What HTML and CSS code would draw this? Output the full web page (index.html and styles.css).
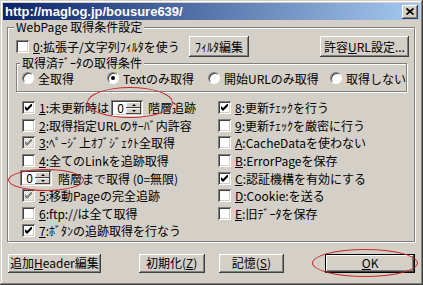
FILE: index.html
```html
<!DOCTYPE html>
<html lang="ja">
<head>
<meta charset="UTF-8">
<title>http://maglog.jp/bousure639/</title>
<link rel="stylesheet" href="styles.css">
</head>
<body>
<div class="window">
    <!-- タイトルバー -->
    <div class="titlebar">
        <span class="title">http://maglog.jp/bousure639/</span>
        <span class="close">
            <svg width="8" height="7" viewBox="0 0 8 7"><path d="M0.5 0.5l7 6M7.5 0.5l-7 6" stroke="#000" stroke-width="1.7"/></svg>
        </span>
    </div>

    <div class="content">
        <fieldset class="group main">
            <legend>WebPage 取得条件設定</legend>

            <div class="top-row">
                <label class="check first"><span class="box"></span><span><u>0</u>:拡張子/文字列ﾌｨﾙﾀを使う</span></label>
                <button class="btn filter">ﾌｨﾙﾀ編集</button>
                <button class="btn allow">許容<u>U</u>RL設定...</button>
            </div>

            <fieldset class="group sub">
                <legend>取得済ﾃﾞｰﾀの取得条件</legend>
                <div class="radios">
                    <label class="radio r1"><span class="dot"></span>全取得</label>
                    <label class="radio r2"><span class="dot on"></span>Textのみ取得</label>
                    <label class="radio r3"><span class="dot"></span>開始URLのみ取得</label>
                    <label class="radio"><span class="dot"></span>取得しない</label>
                </div>
            </fieldset>

            <div class="options">
                <div class="col left">
                    <label class="check">
                        <span class="box"><svg width="7" height="7" viewBox="0 0 7 7"><polygon points="0,2 2,4 7,-1 7,2 2,7 0,5"/></svg></span>
                        <span class="lbl-1"><u>1</u>:未更新時は</span>
                        <span class="spin s1"><span class="spin-val">0</span><span class="spin-btns"><span class="up"></span><span class="down"></span></span></span>
                        <span class="after-spin">階層追跡</span>
                    </label>
                    <label class="check"><span class="box"></span><span><u>2</u>:取得指定URLのｻｰﾊﾞ内許容</span></label>
                    <label class="check"><span class="box off"><svg width="7" height="7" viewBox="0 0 7 7"><polygon points="0,2 2,4 7,-1 7,2 2,7 0,5"/></svg></span><span><u>3</u>:ﾍﾟｰｼﾞ上ｵﾌﾞｼﾞｪｸﾄ全取得</span></label>
                    <label class="check"><span class="box"></span><span><u>4</u>:全てのLinkを追跡取得</span></label>
                    <div class="check depth">
                        <span class="spin"><span class="spin-val">0</span><span class="spin-btns"><span class="up"></span><span class="down"></span></span></span>
                        <span>階層まで取得 (0=無限)</span>
                    </div>
                    <label class="check"><span class="box off"><svg width="7" height="7" viewBox="0 0 7 7"><polygon points="0,2 2,4 7,-1 7,2 2,7 0,5"/></svg></span><span><u>5</u>:移動Pageの完全追跡</span></label>
                    <label class="check"><span class="box"></span><span><u>6</u>:ftp://は全て取得</span></label>
                    <label class="check"><span class="box"><svg width="7" height="7" viewBox="0 0 7 7"><polygon points="0,2 2,4 7,-1 7,2 2,7 0,5"/></svg></span><span><u>7</u>:ﾎﾞﾀﾝの追跡取得を行なう</span></label>
                </div>
                <div class="col right">
                    <label class="check"><span class="box"><svg width="7" height="7" viewBox="0 0 7 7"><polygon points="0,2 2,4 7,-1 7,2 2,7 0,5"/></svg></span><span><u>8</u>:更新ﾁｪｯｸを行う</span></label>
                    <label class="check"><span class="box"></span><span><u>9</u>:更新ﾁｪｯｸを厳密に行う</span></label>
                    <label class="check"><span class="box"></span><span><u>A</u>:CacheDataを使わない</span></label>
                    <label class="check"><span class="box"></span><span><u>B</u>:ErrorPageを保存</span></label>
                    <label class="check"><span class="box"><svg width="7" height="7" viewBox="0 0 7 7"><polygon points="0,2 2,4 7,-1 7,2 2,7 0,5"/></svg></span><span><u>C</u>:認証機構を有効にする</span></label>
                    <label class="check"><span class="box"></span><span><u>D</u>:Cookie:を送る</span></label>
                    <label class="check"><span class="box"></span><span><u>E</u>:旧ﾃﾞｰﾀを保存</span></label>
                </div>
            </div>
        </fieldset>

        <!-- 下のボタン -->
        <div class="buttons">
            <button class="btn header">追加<u>H</u>eader編集</button>
            <button class="btn reset">初期化(<u>Z</u>)</button>
            <button class="btn save">記憶(<u>S</u>)</button>
            <button class="btn ok"><u>O</u>K</button>
        </div>
    </div>

    <!-- 赤い丸印 -->
    <span class="mark m1"></span>
    <span class="mark m2"></span>
    <span class="mark m3"></span>
</div>
</body>
</html>
```

FILE: styles.css
```css
* {
    margin: 0;
    padding: 0;
    box-sizing: border-box;
}
body {
    margin: 0;
    background: #d4d0c8;
    font-family: "Noto Sans CJK JP", sans-serif;
    font-size: 12px;
    color: #000;
}

/* ウィンドウ枠 */
.window {
    position: relative;
    width: 423px;
    height: 285px;
    padding: 3px;
    background: #d4d0c8;
    box-shadow: inset -1px -1px #404040, inset 1px 1px #d4d0c8, inset -2px -2px #808080, inset 2px 2px #fff;
}
.titlebar {
    height: 17px;
    display: flex;
    align-items: center;
    justify-content: space-between;
    padding: 0 2px 0 2px;
    background: linear-gradient(to right, #0a246a, #a6caf0);
    color: #fff;
    font: bold 13px/14px "Liberation Sans", sans-serif;
}
.close {
    width: 16px;
    height: 14px;
    display: flex;
    align-items: center;
    justify-content: center;
    background: #d4d0c8;
    box-shadow: inset -1px -1px #404040, inset 1px 1px #fff, inset -2px -2px #808080, inset 2px 2px #d4d0c8;
}

.content {
    padding: 0 5px 0 4px;
}

/* グループ枠 */
.group {
    border: 1px solid #808080;
    box-shadow: inset 1px 1px #fff, 1px 1px #fff;
    min-width: 0;
}
.group legend {
    padding: 0 2px;
    margin-left: -2px;
    line-height: 12px;
    background: #d4d0c8;
}
.main {
    margin-top: 1px;
    padding: 3px 7px 1px 8px;
}
.sub {
    padding: 0 0 4px 5px;
}

/* 1行目 */
.top-row {
    display: flex;
    align-items: center;
    height: 21px;
    margin-right: -2px;
}
.top-row .first {
    width: 173px;
}
.btn {
    font: inherit;
    color: #000;
    border: none;
    background: #d4d0c8;
    height: 21px;
    line-height: 12px;
    box-shadow: inset -1px -1px #404040, inset 1px 1px #fff, inset -2px -2px #808080, inset 2px 2px #d4d0c8;
}
.filter {
    width: 60px;
}
.allow {
    width: 89px;
    margin-left: auto;
}

/* ラジオボタン */
.radios {
    display: flex;
    align-items: center;
    height: 18px;
}
.radio {
    display: flex;
    align-items: center;
    gap: 4px;
}
.r1 { width: 85px; }
.r2 { width: 101px; }
.r3 { width: 122px; }
.dot {
    width: 12px;
    height: 12px;
    border-radius: 50%;
    background: #fff;
    border: 1px solid;
    border-color: #808080 #fff #fff #808080;
    box-shadow: inset 1px 1px #404040;
    display: flex;
    align-items: center;
    justify-content: center;
}
.dot.on::before {
    content: '';
    width: 4px;
    height: 4px;
    border-radius: 50%;
    background: #000;
}

/* チェックボックス */
.options {
    display: flex;
    margin: 7px 0 0 6px;
}
.col {
    display: flex;
    flex-direction: column;
}
.left {
    width: 196px;
}
.check {
    display: flex;
    align-items: center;
    gap: 4px;
    height: 17.6px;
    white-space: nowrap;
}
.box {
    width: 13px;
    height: 13px;
    flex: none;
    background: #fff;
    box-shadow: inset 1px 1px #808080, inset -1px -1px #fff, inset 2px 2px #404040, inset -2px -2px #d4d0c8;
    display: flex;
    align-items: center;
    justify-content: center;
}
.box svg {
    fill: #000;
}
.box.off {
    background: repeating-conic-gradient(#fff 0 25%, #d4d0c8 0 50%) 0 0 / 2px 2px;
}
.box.off svg {
    fill: #808080;
}

/* スピンボックス */
.spin {
    width: 32px;
    height: 16px;
    display: flex;
    padding: 2px;
    background: #fff;
    box-shadow: inset 1px 1px #808080, inset -1px -1px #fff, inset 2px 2px #404040, inset -2px -2px #d4d0c8;
}
.spin-val {
    flex: 1;
    text-align: right;
    padding-right: 2px;
    line-height: 12px;
}
.spin-btns {
    width: 15px;
    display: flex;
    flex-direction: column;
}
.spin-btns span {
    flex: 1;
    display: flex;
    align-items: center;
    justify-content: center;
    background: #d4d0c8;
    box-shadow: inset -1px -1px #404040, inset 1px 1px #fff;
}
.up::before,
.down::before {
    content: '';
    border-left: 2px solid transparent;
    border-right: 2px solid transparent;
}
.up::before {
    border-bottom: 2px solid #000;
}
.down::before {
    border-top: 2px solid #000;
}
.s1 {
    margin-left: -2px;
}
.after-spin {
    margin-left: 1px;
}
.depth {
    margin-left: -2px;
    gap: 6px;
}

/* 下のボタン */
.buttons {
    display: flex;
    margin-top: 12px;
    padding-left: 1px;
}
.buttons .btn {
    height: 19px;
}
.header {
    width: 93px;
}
.reset {
    width: 66px;
    margin-left: 38px;
}
.save {
    width: 66px;
    margin-left: 14px;
}
.ok {
    width: 90px;
    margin-left: 41px;
    box-shadow: inset 0 0 0 1px #000, inset -2px -2px #404040, inset 2px 2px #fff, inset -3px -3px #808080;
}

/* 赤い丸印 */
.mark {
    position: absolute;
    border: 1px solid #c82828;
    border-radius: 50%;
}
.m1 {
    left: 87px;
    top: 87px;
    width: 86px;
    height: 31px;
}
.m2 {
    left: 8px;
    top: 169px;
    width: 76px;
    height: 22px;
}
.m3 {
    left: 312px;
    top: 249px;
    width: 106px;
    height: 28px;
}
```
